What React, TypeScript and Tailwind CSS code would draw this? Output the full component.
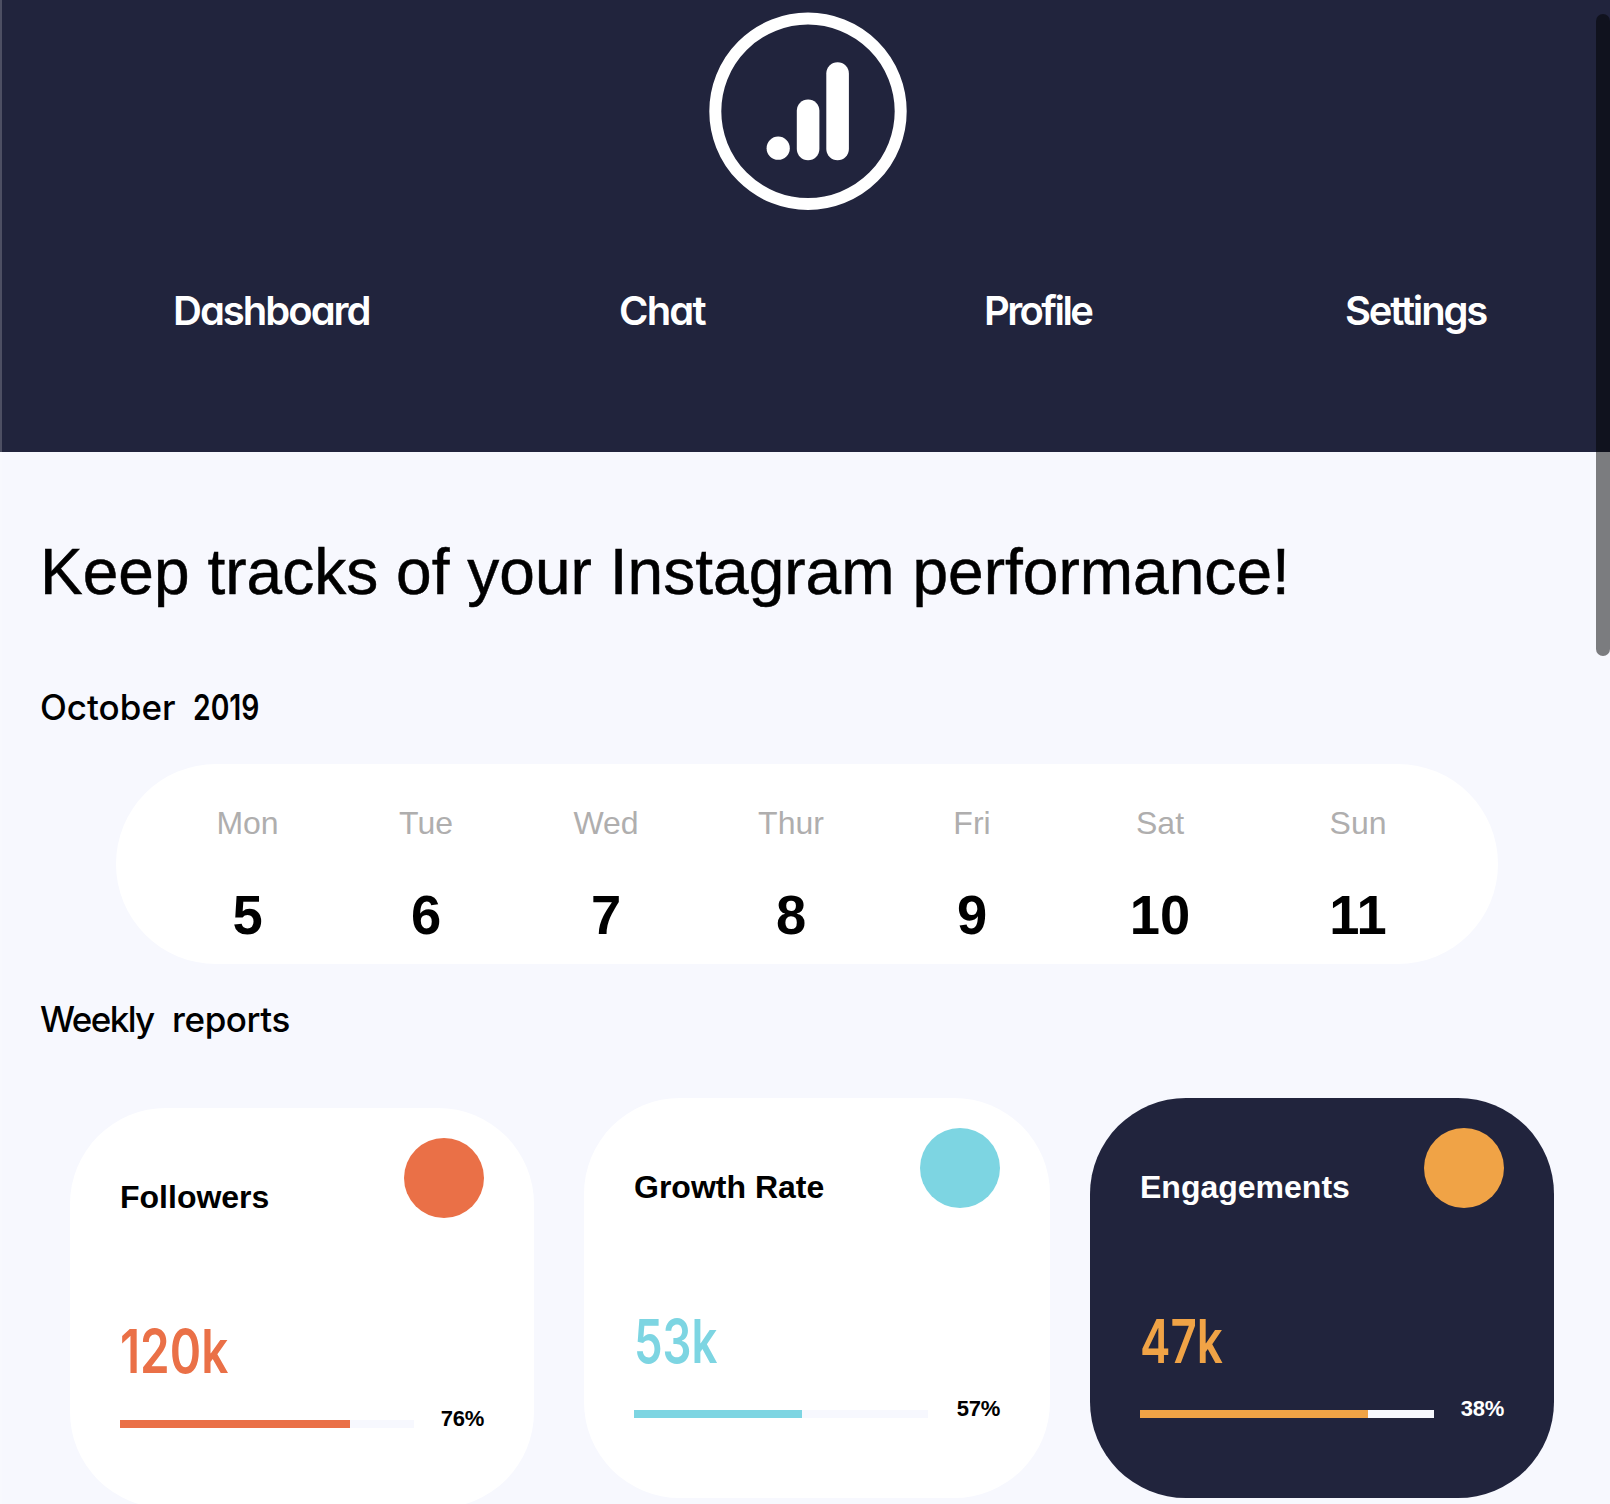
const navItems = [
  { label: "Dashboard", tracking: "tracking-[-2px]" },
  { label: "Chat", tracking: "tracking-[-1.8px]" },
  { label: "Profile", tracking: "tracking-[-2.6px]" },
  { label: "Settings", tracking: "tracking-[-2.2px]" },
];

const days = [
  { name: "Mon", date: "5" },
  { name: "Tue", date: "6" },
  { name: "Wed", date: "7" },
  { name: "Thur", date: "8" },
  { name: "Fri", date: "9" },
  { name: "Sat", date: "10" },
  { name: "Sun", date: "11" },
];

const reports = [
  {
    title: "Followers",
    value: "120k",
    percent: "76%",
    fill: 230,
    card: "mt-2.5 w-[464px] bg-white text-black",
    accent: "bg-[#ea7047]",
    valueStyle: "text-[#ea7047] scale-x-[0.78]",
  },
  {
    title: "Growth Rate",
    value: "53k",
    percent: "57%",
    fill: 168,
    card: "ml-[50px] w-[466px] bg-white text-black",
    accent: "bg-[#7dd5e2]",
    valueStyle: "text-[#7dd5e2] scale-x-[0.745]",
  },
  {
    title: "Engagements",
    value: "47k",
    percent: "38%",
    fill: 228,
    card: "ml-10 w-[464px] bg-[#21243d] text-white",
    accent: "bg-[#f0a346]",
    valueStyle: "text-[#f0a346] scale-x-[0.75]",
  },
];

function Logo() {
  return (
    <svg width="198" height="198" viewBox="0 0 198 198" fill="white">
      <circle cx="99" cy="99.3" r="92.7" fill="none" stroke="white" strokeWidth="12" />
      <circle cx="69.2" cy="136.2" r="11.6" />
      <rect x="87.8" y="87.5" width="22.6" height="60.8" rx="11.3" />
      <rect x="117.3" y="50.2" width="22.6" height="98.1" rx="11.3" />
    </svg>
  );
}

function Header() {
  return (
    <header className="h-[452px] bg-[#21243d] pt-3 text-white">
      <div className="flex justify-center pl-[5px]">
        <Logo />
      </div>
      <nav className="mt-[76px] grid grid-cols-[446px_365px_361px_auto] pl-[173px] font-['Inter',sans-serif] text-[40px] leading-[50px] font-semibold [font-feature-settings:'cv11']">
        {navItems.map((item) => (
          <a key={item.label} className={item.tracking}>
            {item.label}
          </a>
        ))}
      </nav>
    </header>
  );
}

function Week() {
  return (
    <section className="mt-[34px] ml-[116px] grid h-[200px] w-[1382px] grid-cols-[175px_182px_178px_192px_170px_206px_190px] rounded-[100px] bg-white pt-[39px] pl-11 text-center">
      {days.map((day) => (
        <div key={day.name}>
          <div className="text-[32px] leading-10 text-[#afaeae]">{day.name}</div>
          <div className="mt-[42px] scale-x-[0.97] text-[56px] leading-[60px] font-bold">{day.date}</div>
        </div>
      ))}
    </section>
  );
}

function ReportCard({ report }: { report: (typeof reports)[number] }) {
  return (
    <article className={`h-[400px] shrink-0 rounded-[96px] px-[50px] pt-[30px] ${report.card}`}>
      <div className="flex h-20 items-start justify-between">
        <h3 className="mt-[41px] text-[32px] leading-9 font-bold">{report.title}</h3>
        <div className={`size-20 rounded-full ${report.accent}`} />
      </div>
      <div
        className={`mt-[103px] w-fit origin-left font-['Inter',sans-serif] text-[61px] leading-[60px] font-semibold ${report.valueStyle}`}
      >
        {report.value}
      </div>
      <div className="mt-[27px] flex h-5 items-end justify-between">
        <div className="h-2 w-[294px] bg-[#f7f8fe]">
          <div className={`h-2 ${report.accent}`} style={{ width: report.fill }} />
        </div>
        <span className="-mb-px text-[22px] leading-5 font-bold tracking-[-0.3px]">{report.percent}</span>
      </div>
    </article>
  );
}

export default function App() {
  return (
    <div className="relative h-[1504px] w-[1610px] overflow-hidden bg-[#f7f8fe] font-['Liberation_Sans',Arial,sans-serif] text-black">
      <Header />
      <main>
        <h1 className="mt-[85px] pl-10 text-[64px] leading-[70px] tracking-[0.03px] [-webkit-text-stroke:0.5px_black]">
          Keep tracks of your Instagram performance!
        </h1>
        <h2 className="mt-[78px] flex pl-10 font-['Inter',sans-serif] text-[35px] leading-[44px] font-medium">
          <span className="w-[153px]">October</span>
          <span className="origin-left scale-x-[0.81] font-semibold">2019</span>
        </h2>
        <div className="h-px" />
        <Week />
        <h2 className="mt-[33px] flex pl-10 font-['Inter',sans-serif] text-[35px] leading-[44px] font-medium">
          <span className="w-[132px] tracking-[-1.6px]">Weekly</span>
          <span className="tracking-[-0.4px]">reports</span>
        </h2>
        <section className="mt-[57px] flex items-start pl-[70px]">
          {reports.map((report) => (
            <ReportCard key={report.title} report={report} />
          ))}
        </section>
      </main>
      <div className="absolute top-0 left-0 h-full w-0.5 bg-white/20" />
      <div className="absolute top-3.5 right-0 h-[642px] w-3.5 rounded-full bg-black/50" />
    </div>
  );
}
